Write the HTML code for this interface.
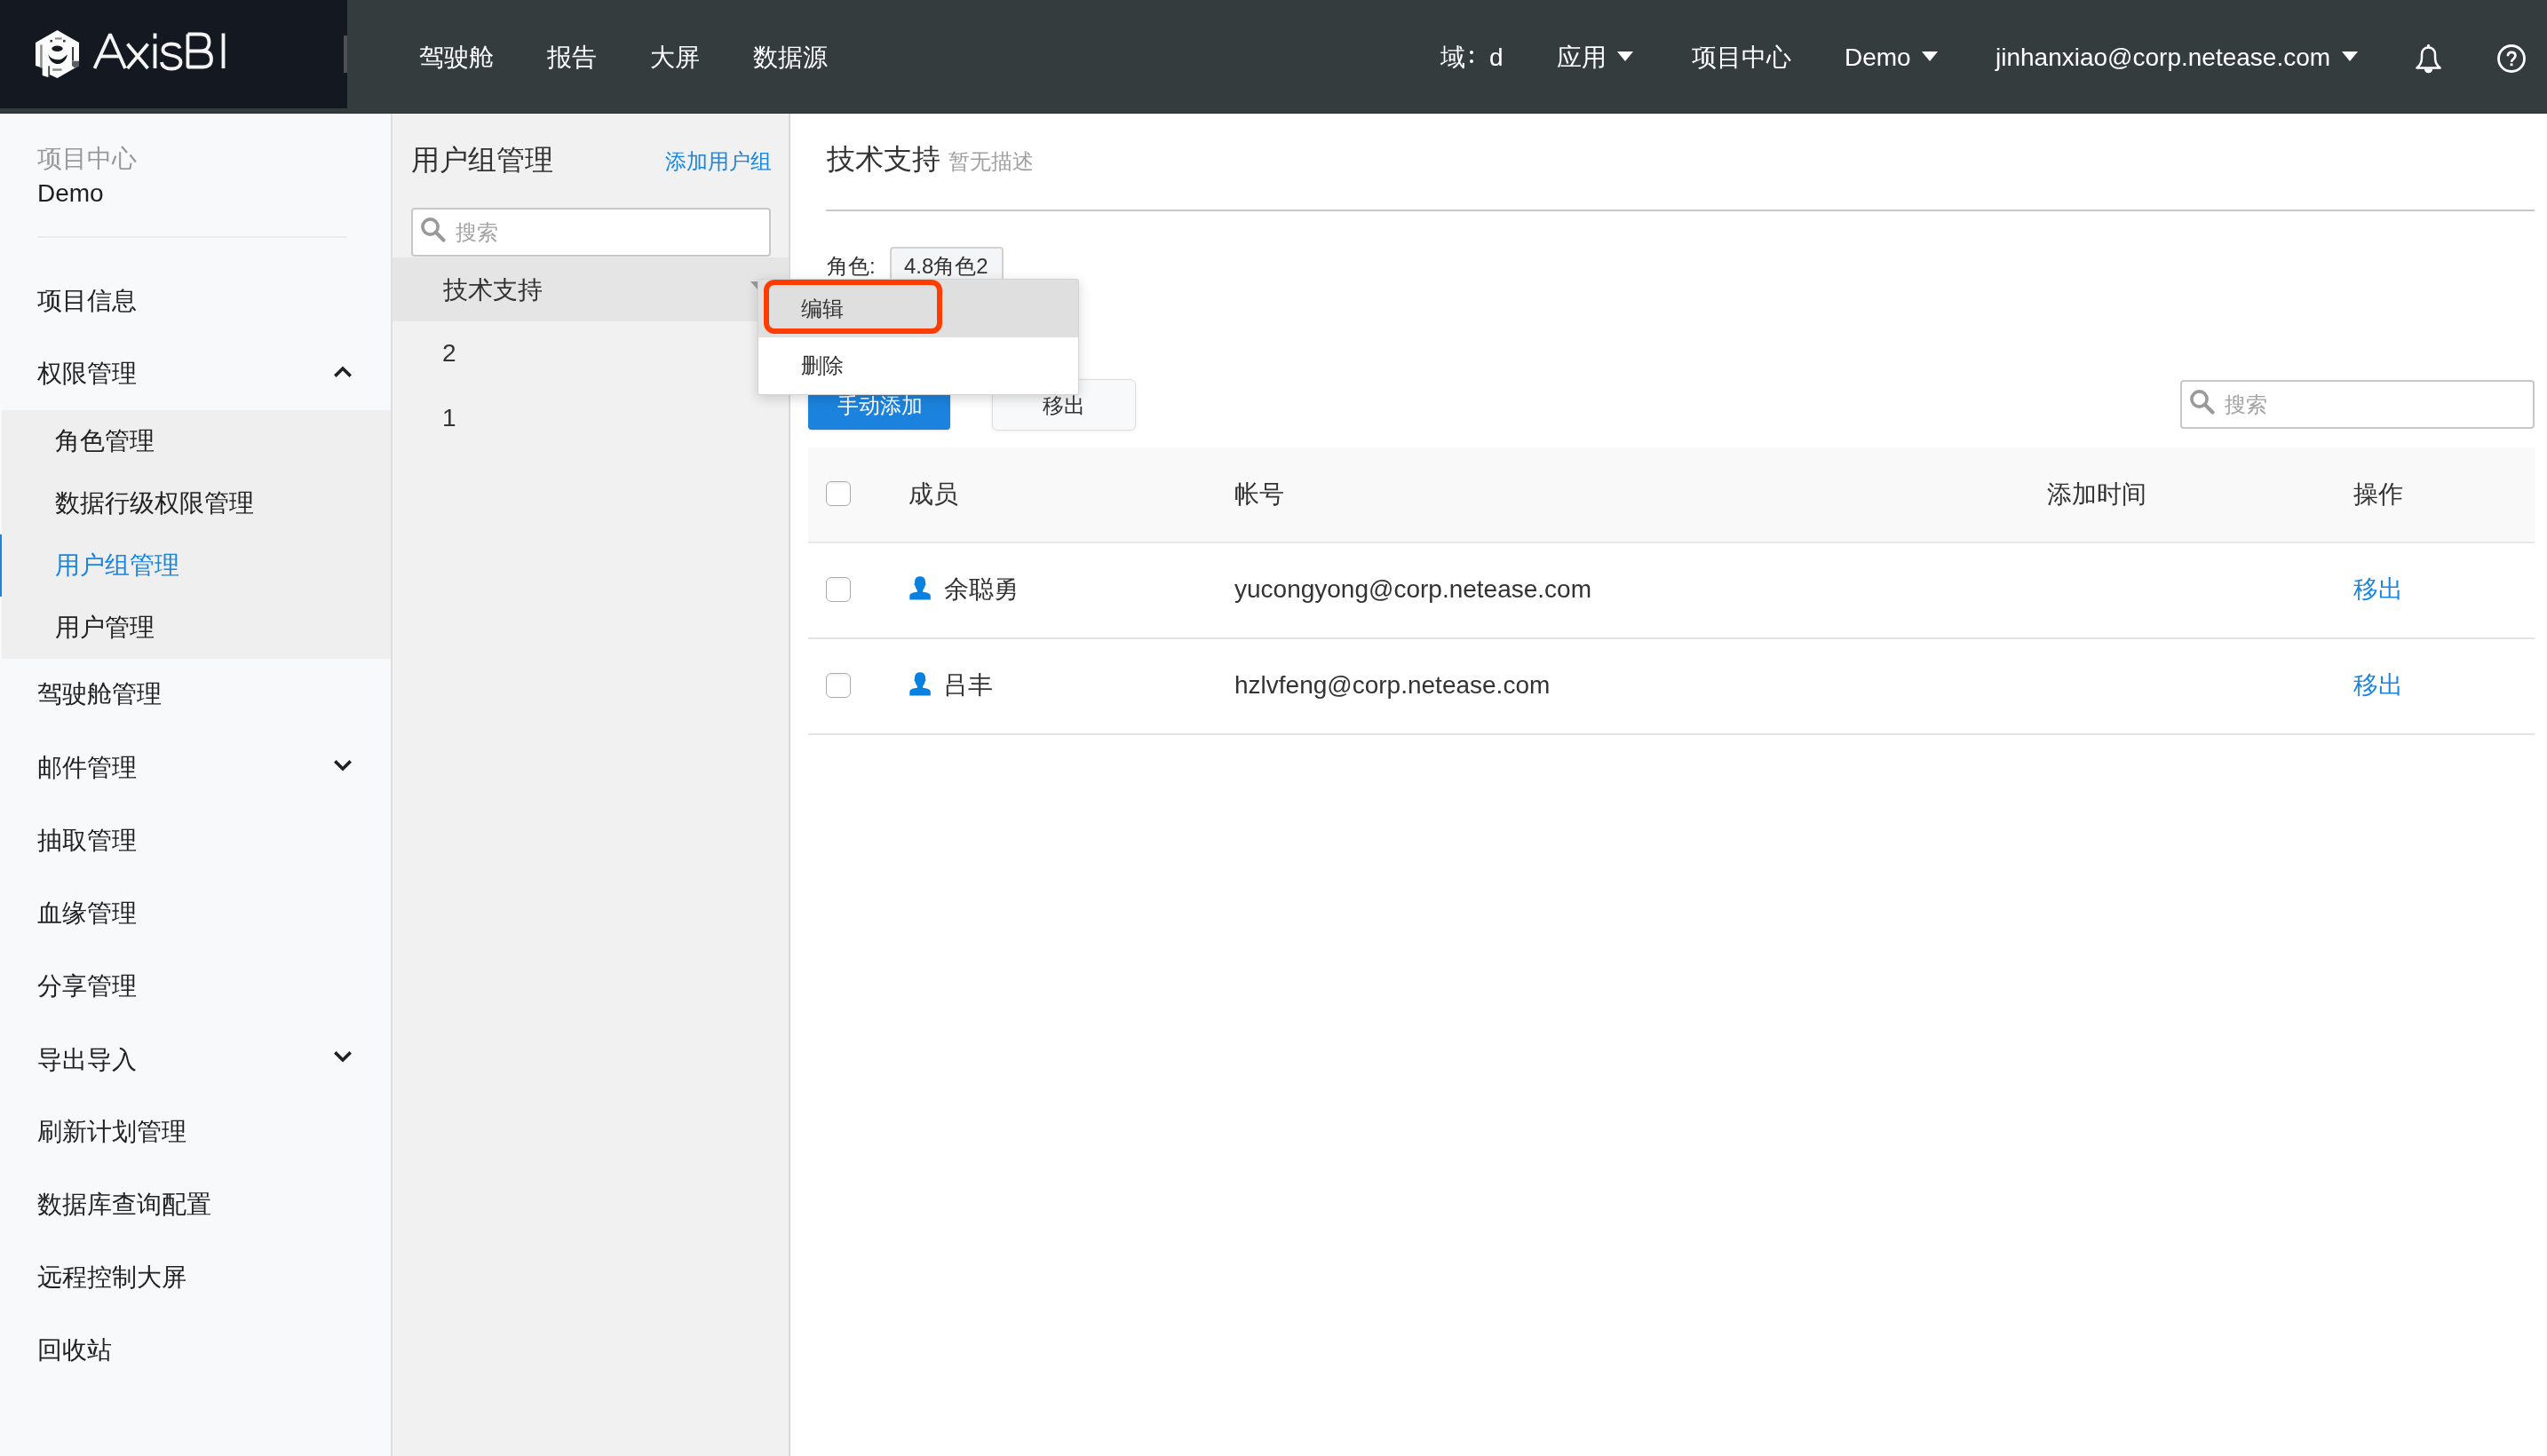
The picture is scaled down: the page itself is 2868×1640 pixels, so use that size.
<!DOCTYPE html>
<html><head><meta charset="utf-8">
<style>
*{box-sizing:border-box;margin:0;padding:0}
html,body{width:2868px;height:1640px;overflow:hidden;background:#fff;font-family:"Liberation Sans",sans-serif;color:#333}
.a{position:absolute;white-space:nowrap;will-change:transform}
.t28{font-size:28px;line-height:28px}
.t24{font-size:24px;line-height:24px}
.t32{font-size:32px;line-height:32px}
#hdr{position:absolute;left:0;top:0;width:2868px;height:128px;background:#353c3e;border-bottom:1px solid #2a3032}
#logo{position:absolute;left:0;top:0;width:391px;height:122px;background:#141820}
.w{color:#fff}
#side{position:absolute;left:0;top:128px;width:442px;height:1512px;background:#f8f9fb;border-right:2px solid #dfdfdf}
#mid{position:absolute;left:442px;top:128px;width:448px;height:1512px;background:#f1f1f1;border-right:2px solid #dadada}
#main{position:absolute;left:890px;top:128px;width:1978px;height:1512px;background:#fff}
.sub{position:absolute;left:2px;top:462px;width:438px;height:280px;background:#efefef}
.blue{color:#1b84df}
.gray{color:#999}
.sd{color:#222}
.tri{width:0;height:0;border-left:9px solid transparent;border-right:9px solid transparent;border-top:11px solid #fff}
.cb{width:28px;height:28px;border:1.5px solid #ababab;border-radius:6px;background:#fff;box-shadow:inset 0 2px 2px rgba(0,0,0,0.05)}
.chev{position:absolute;width:20px;height:14px}

</style></head><body>
<div id="hdr"></div>
<div id="logo"></div>
<div id="side"></div>
<div id="mid"></div>
<div id="main"></div>

<!-- header content -->
<div class="a w t28" style="left:472px;top:51px">驾驶舱</div>
<div class="a w t28" style="left:616px;top:51px">报告</div>
<div class="a w t28" style="left:732px;top:51px">大屏</div>
<div class="a w t28" style="left:848px;top:51px">数据源</div>


<!-- logo -->
<svg class="a" style="left:38px;top:32px" width="54" height="58" viewBox="0 0 54 58">
<polygon points="26.5,2 51,15.9 51,41.9 26.5,56 18,52 16.3,55 9.7,53 9.7,44.5 2,41.9 2,15.9" fill="#fbfbfb"/>
<rect x="7.2" y="18.4" width="2.5" height="26" fill="#8a8a8a"/>
<ellipse cx="26.5" cy="22.8" rx="6.2" ry="3.2" fill="#141820"/>
<path d="M16.3,29.5 C18,37.5 23,40 27,40 C31,40 36,37.5 38,29.5 L34.5,32.3 C32,34.8 29.5,35.3 27,35.3 C24.5,35.3 21,34.5 18.5,32.3 Z" fill="#141820"/>
<rect x="43.1" y="21" width="1.9" height="15.5" fill="#2a2e35"/>
<polygon points="43,36.8 51,36.8 51,41.9 46,44.5 43,42" fill="#5a5d63"/>
<rect x="16.3" y="42.3" width="1.8" height="13" fill="#3a3d44"/>
<rect x="21.2" y="45.3" width="10.4" height="2.5" fill="#8a8a8a"/>
<rect x="18.4" y="12.9" width="2.6" height="2.6" fill="#3a3d44"/>
<rect x="33" y="12.9" width="2.6" height="2.6" fill="#3a3d44"/>
<rect x="24" y="10.4" width="7.6" height="2.1" fill="#8a8a8a"/>
</svg>
<svg class="a" style="left:0;top:0" width="270" height="100" viewBox="0 0 270 100" fill="none" stroke="#f4f4f4" stroke-width="3.8" stroke-linejoin="bevel">
<path d="M106.5,77 L124,38.5 L141,77"/>
<path d="M112.5,63.5 L135,63.5"/>
<path d="M143.5,49.5 L166.5,77 M166.5,49.5 L143.5,77"/>
<path d="M174.5,49.5 L174.5,77"/>
<rect x="172.6" y="37.5" width="3.8" height="6" fill="#f4f4f4" stroke="none"/>
<path d="M202.5,54.5 C201.5,50.5 197.5,49.5 193,49.5 C187,49.5 183.5,52 183.5,56 C183.5,60.5 188,61.5 193,62.5 C199,63.5 203.5,65 203.5,70 C203.5,75 199,77.5 193,77.5 C187,77.5 182.5,75 182,70"/>
<path d="M211.5,38.5 L211.5,75.5 L228,75.5 C235,75.5 238,72 238,66.5 C238,60.5 234.5,57.5 227.5,57.5 L211.5,57.5 M211.5,38.5 L226,38.5 C232.5,38.5 235.5,42 235.5,47.5 C235.5,53.5 232,57.5 226,57.5"/>
<path d="M251.5,37.5 L251.5,77"/>
</svg>
<div class="a" style="left:387px;top:40px;width:4px;height:42px;background:#4f5055"></div>

<div class="a w t28" style="left:1622px;top:51px">域</div>
<div class="a" style="left:1654.5px;top:56.5px;width:3.8px;height:3.8px;border-radius:50%;background:#fff"></div>
<div class="a" style="left:1654.5px;top:67px;width:3.8px;height:3.8px;border-radius:50%;background:#fff"></div>
<div class="a w t28" style="left:1677px;top:51px">d</div>
<div class="a w t28" style="left:1753px;top:51px">应用</div>
<div class="a tri" style="left:1821px;top:58px"></div>
<div class="a w t28" style="left:1905px;top:51px">项目中心</div>
<div class="a w t28" style="left:2077px;top:51px">Demo</div>
<div class="a tri" style="left:2164px;top:58px"></div>
<div class="a w t28" style="left:2247px;top:51px">jinhanxiao@corp.netease.com</div>
<div class="a tri" style="left:2637px;top:58px"></div>
<svg class="a" style="left:2716px;top:48px" width="38" height="36" viewBox="0 0 38 36">
<path d="M18.5,5.6 C14,5.6 11,8.6 11,13.5 L11,17 C11,22.5 9.5,25.5 5.4,28.6 L31.6,28.6 C27.5,25.5 26,22.5 26,17 L26,13.5 C26,8.6 23,5.6 18.5,5.6 Z" fill="none" stroke="#fff" stroke-width="2.5" stroke-linejoin="round"/>
<circle cx="18.5" cy="3.4" r="1.6" fill="#fff"/>
<path d="M13.8,29.6 A4.75,4.75 0 0 0 23.3,29.6 Z" fill="#fff"/>
</svg>
<svg class="a" style="left:2809px;top:48px" width="38" height="38" viewBox="0 0 38 38">
<circle cx="19" cy="18" r="14.5" fill="none" stroke="#fff" stroke-width="2.8"/>
<path d="M14.9,15.3 C14.9,12.3 16.8,10.9 19.2,10.9 C21.8,10.9 23.4,12.5 23.4,14.8 C23.4,17.6 20.2,18.3 19.3,20.8 L19.3,21.8" fill="none" stroke="#fff" stroke-width="2.7"/>
<rect x="17.6" y="23.4" width="2.9" height="2.8" fill="#fff"/>
</svg>

<!-- sidebar -->
<div class="a t28 gray" style="left:42px;top:165px">项目中心</div>
<div class="a t28 sd" style="left:42px;top:204px;color:#1f1f1f">Demo</div>
<div class="a" style="left:42px;top:266px;width:349px;height:2px;background:#ebebeb"></div>
<div class="a t28 sd" style="left:42px;top:325px">项目信息</div>
<div class="a t28 sd" style="left:42px;top:407px">权限管理</div>
<div class="sub"></div>
<div class="a t28 sd" style="left:62px;top:483px">角色管理</div>
<div class="a t28 sd" style="left:62px;top:553px">数据行级权限管理</div>
<div class="a t28 blue" style="left:62px;top:623px">用户组管理</div>
<div class="a" style="left:0;top:602px;width:2px;height:70px;background:#1b84df"></div>
<div class="a t28 sd" style="left:62px;top:693px">用户管理</div>
<div class="a t28 sd" style="left:42px;top:768px">驾驶舱管理</div>
<div class="a t28 sd" style="left:42px;top:851px">邮件管理</div>
<div class="a t28 sd" style="left:42px;top:933px">抽取管理</div>
<div class="a t28 sd" style="left:42px;top:1015px">血缘管理</div>
<div class="a t28 sd" style="left:42px;top:1097px">分享管理</div>
<div class="a t28 sd" style="left:42px;top:1180px">导出导入</div>
<div class="a t28 sd" style="left:42px;top:1261px">刷新计划管理</div>
<div class="a t28 sd" style="left:42px;top:1343px">数据库查询配置</div>
<div class="a t28 sd" style="left:42px;top:1425px">远程控制大屏</div>
<div class="a t28 sd" style="left:42px;top:1507px">回收站</div>


<svg class="chev" style="left:376px;top:411px" width="20" height="14" viewBox="0 0 20 14"><path d="M1.3,12.6 L10,4 L18.7,12.6" fill="none" stroke="#222" stroke-width="3.6"/></svg>
<svg class="chev" style="left:376px;top:856px" width="20" height="14" viewBox="0 0 20 14"><path d="M1.3,1.4 L10,10 L18.7,1.4" fill="none" stroke="#222" stroke-width="3.6"/></svg>
<svg class="chev" style="left:376px;top:1184px" width="20" height="14" viewBox="0 0 20 14"><path d="M1.3,1.4 L10,10 L18.7,1.4" fill="none" stroke="#222" stroke-width="3.6"/></svg>

<!-- middle panel -->
<div class="a t32" style="left:463px;top:164px">用户组管理</div>
<div class="a t24 blue" style="left:749px;top:170px">添加用户组</div>
<div class="a" style="left:463px;top:234px;width:405px;height:55px;background:#fff;border:2px solid #c8c8c8;border-radius:4px"></div>
<svg class="a" style="left:472px;top:243px" width="32" height="32" viewBox="0 0 32 32"><circle cx="12.5" cy="12.5" r="8.6" fill="none" stroke="#999" stroke-width="3.6"/><path d="M18.8,18.8 L27.5,27.5" stroke="#999" stroke-width="4.2" stroke-linecap="round"/></svg>
<div class="a t24" style="left:513px;top:250px;color:#a3a3a3">搜索</div>
<div class="a" style="left:442px;top:290px;width:446px;height:72px;background:#e5e5e5"></div>
<div class="a t28" style="left:499px;top:313px">技术支持</div>
<div class="a t28" style="left:498px;top:384px">2</div>
<div class="a t28" style="left:498px;top:457px">1</div>
<svg class="a" style="left:845px;top:317px" width="9" height="10" viewBox="0 0 9 10"><path d="M0,0 L8,0 L8,9 Z" fill="#9a9a9a"/></svg>

<!-- main -->
<div class="a t32" style="left:931px;top:163px">技术支持</div>
<div class="a t24" style="left:1068px;top:170px;color:#a0a0a0">暂无描述</div>
<div class="a" style="left:930px;top:236px;width:1924px;height:2px;background:#c9c9c9"></div>
<div class="a t24" style="left:931px;top:288px">角色:</div>
<div class="a" style="left:1002px;top:278px;width:128px;height:46px;background:#f4f5f7;border:2px solid #d2d2d2;border-radius:4px"></div>
<div class="a t24" style="left:1018px;top:288px">4.8角色2</div>

<div class="a" style="left:910px;top:427px;width:160px;height:57px;background:#1b83de;border-radius:4px;box-shadow:0 1px 3px rgba(0,0,0,0.12)"></div>
<div class="a t24" style="left:943px;top:445px;color:#fff">手动添加</div>
<div class="a" style="left:1117px;top:427px;width:162px;height:58px;background:#f8f9fb;border:1.5px solid #dedede;border-radius:6px;box-shadow:0 1px 4px rgba(0,0,0,0.07)"></div>
<div class="a t24" style="left:1174px;top:445px">移出</div>

<div class="a" style="left:2455px;top:428px;width:399px;height:55px;background:#fff;border:2px solid #c8c8c8;border-radius:4px"></div>
<svg class="a" style="left:2464px;top:437px" width="32" height="32" viewBox="0 0 32 32"><circle cx="12.5" cy="12.5" r="8.6" fill="none" stroke="#999" stroke-width="3.6"/><path d="M18.8,18.8 L27.5,27.5" stroke="#999" stroke-width="4.2" stroke-linecap="round"/></svg>
<div class="a t24" style="left:2505px;top:444px;color:#a3a3a3">搜索</div>

<div class="a" style="left:910px;top:504px;width:1944px;height:108px;background:#f9f9f9;border-bottom:2px solid #e8e8e8"></div>
<div class="a cb" style="left:930px;top:542px"></div>
<div class="a t28" style="left:1023px;top:543px">成员</div>
<div class="a t28" style="left:1390px;top:543px">帐号</div>
<div class="a t28" style="left:2305px;top:543px">添加时间</div>
<div class="a t28" style="left:2650px;top:543px">操作</div>

<div class="a" style="left:910px;top:718px;width:1944px;height:2px;background:#e3e3e3"></div>
<div class="a cb" style="left:930px;top:650px"></div>
<svg class="a usr" style="left:1023px;top:648px" width="26" height="28" viewBox="0 0 26 28"><path d="M13,1.3 C9,1.3 7,4 7,7.5 L7,9 C6.2,9.3 6.2,10.6 7.2,11.2 C7.8,13.6 8.8,15.6 10,17 L10,18.6 C8,19.2 5,19.6 3,20.4 C1.8,21 1.3,22 1.3,23.5 L1.3,27.5 L24.8,27.5 L24.8,23.5 C24.8,22 24.2,21 23,20.4 C21,19.6 18,19.2 16,18.6 L16,17 C17.2,15.6 18.2,13.6 18.8,11.2 C19.8,10.6 19.8,9.3 19,9 L19,7.5 C19,4 17,1.3 13,1.3 Z" fill="#0880e0"/></svg>
<div class="a t28" style="left:1063px;top:650px">余聪勇</div>
<div class="a t28" style="left:1390px;top:650px">yucongyong@corp.netease.com</div>
<div class="a t28 blue" style="left:2650px;top:650px">移出</div>

<div class="a" style="left:910px;top:826px;width:1944px;height:2px;background:#e3e3e3"></div>
<div class="a cb" style="left:930px;top:758px"></div>
<svg class="a usr" style="left:1023px;top:756px" width="26" height="28" viewBox="0 0 26 28"><path d="M13,1.3 C9,1.3 7,4 7,7.5 L7,9 C6.2,9.3 6.2,10.6 7.2,11.2 C7.8,13.6 8.8,15.6 10,17 L10,18.6 C8,19.2 5,19.6 3,20.4 C1.8,21 1.3,22 1.3,23.5 L1.3,27.5 L24.8,27.5 L24.8,23.5 C24.8,22 24.2,21 23,20.4 C21,19.6 18,19.2 16,18.6 L16,17 C17.2,15.6 18.2,13.6 18.8,11.2 C19.8,10.6 19.8,9.3 19,9 L19,7.5 C19,4 17,1.3 13,1.3 Z" fill="#0880e0"/></svg>
<div class="a t28" style="left:1062px;top:758px">吕丰</div>
<div class="a t28" style="left:1390px;top:758px">hzlvfeng@corp.netease.com</div>
<div class="a t28 blue" style="left:2650px;top:758px">移出</div>

<!-- dropdown -->
<div class="a" style="left:853px;top:314px;width:362px;height:131px;background:#fff;border:1px solid #d3d3d3;border-radius:2px;box-shadow:0 4px 14px rgba(0,0,0,0.16)"></div>
<div class="a" style="left:854px;top:315px;width:360px;height:65px;background:#dfdfdf"></div>
<div class="a t24" style="left:902px;top:336px">编辑</div>
<div class="a t24" style="left:902px;top:400px">删除</div>
<div class="a" style="left:860px;top:315px;width:201px;height:61px;border:6px solid #ff3d00;border-radius:12px"></div>
</body></html>
